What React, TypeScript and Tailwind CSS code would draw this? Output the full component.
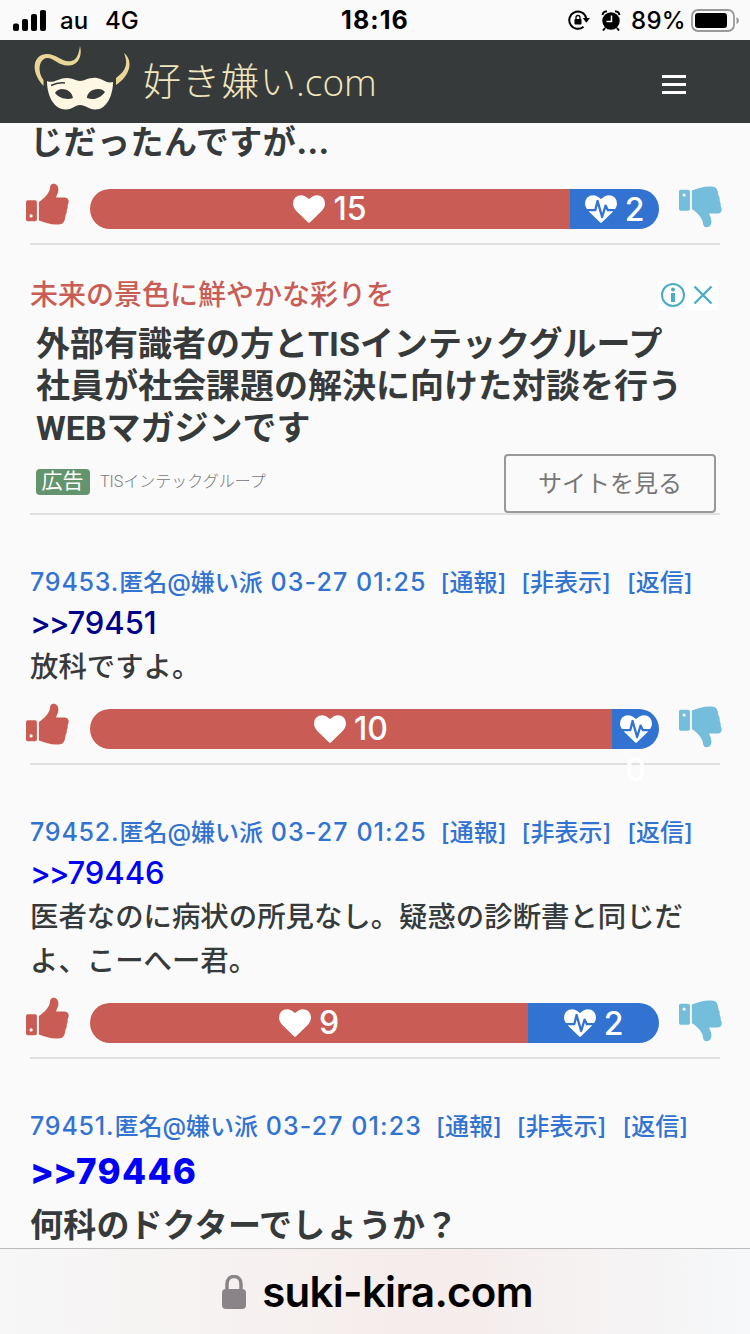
import { FC, ReactNode } from "react";

const HeartIcon: FC = () => (
  <svg viewBox="0 0 1792 1792" className="h-8 w-8 shrink-0 fill-white">
    <path d="M896 1664q-26 0-44-18l-624-602q-10-8-27.500-26t-55.500-65.500-68-97.500-53.500-121-23.500-138q0-220 127-344t351-124q62 0 126.500 21.500t120 58 95.500 68.500 76 68q36-36 76-68t95.500-68.500 120-58 126.500-21.500q224 0 351 124t127 344q0 221-229 450l-623 600q-18 18-44 18z" />
  </svg>
);

const HeartbeatIcon: FC = () => (
  <svg viewBox="0 0 1792 1792" className="my-1 h-8 w-8 shrink-0 fill-white">
    <path d="M1280 1024h305q-5 6-10 10.500t-9 7.500l-3 4-623 600q-18 18-44 18t-44-18l-624-602q-5-2-21-20h369q22 0 39.500-13.500t22.500-34.500l70-281 190 667q6 20 23 33t39 13q21 0 38-13t23-33l146-485 56 112q18 35 57 35zm512-428q0 145-103 300h-369l-111-221q-8-17-25.500-27t-36.500-8q-45 5-56 46l-129 430-196-686q-6-20-23.500-33t-39.500-13-39 13.500-22 34.500l-116 464h-423q-103-155-103-300 0-220 127-344t351-124q62 0 126.500 21.500t120 58 95.500 68.500 76 68q36-36 76-68t95.500-68.500 120-58 126.500-21.500q224 0 351 124t127 344z" />
  </svg>
);

const ThumbIcon: FC<{ className: string }> = ({ className }) => (
  <svg viewBox="0 0 130 126" className={className}>
    <path
      fillRule="evenodd"
      d="M5 52H28Q33 52 33 57V110Q33 115 28 115H5Q0 115 0 110V57Q0 52 5 52ZM15.500 94A5 5 0 1 0 15.500 104A5 5 0 1 0 15.500 94Z"
    />
    <path d="M39 57C57 45 70 30 72 17C73 7 76 2 83 2C93 2 98 10 98 20C98 30 92 37 91 43H115C126 43 130 50 129 58C128 64 125 65 126 71C127 77 122 80 123 86C124 92 120 94 119 100C117 115 114 125 97 125C76 126 58 120 39 113Z" />
  </svg>
);

const MaskLogo: FC = () => (
  <svg viewBox="0 0 120 80" className="h-20 w-[120px] shrink-0">
    <path
      fill="#e9d798"
      d="M23.500 46C9 30 14 14 27 14C38 14 44 25 54 20C58 17 59 12 60 6C62.500 15 59 25 49 25.500C38 26 35 18 27 18C19 19 17 31 23.500 40Z"
    />
    <path fill="#e9d798" d="M104 13C114 21 110 36 96 45V38C107 30 108 23 104 13Z" />
    <path
      fill="#fdf7e4"
      fillRule="evenodd"
      d="M27 41C34 44 38 38 47 38C53 38 56 41 60 41C65 41 69 37 77 38C83 39 87 44 93 42C93 56 86 70 75 69.500C67 69 66 65 60 65C54 65 53 70 45 69.500C34 69 27 56 27 41ZM35 53C40 59 48 60 53 58C52 52 47 49 42 49C39 49 37 50 35 53ZM67 58C75 61 81 57 85 52C81 48 77 49 73 50C70 51 67 54 67 58Z"
    />
    <path d="M31 45.500Q38 42 45 43" fill="none" stroke="#373a3b" strokeWidth="1.500" />
  </svg>
);

const StatusBar: FC = () => (
  <div className="grid h-10 shrink-0 grid-cols-3 items-center pl-[13px] pr-[11px] text-black">
    <div className="flex items-center text-[24px] font-medium">
      <svg viewBox="0 0 33 21" className="mr-[14px] h-[21px] w-[33px]">
        <rect x="0" y="13.500" width="6" height="7.500" rx="2" />
        <rect x="9" y="9" width="6" height="12" rx="2" />
        <rect x="18" y="4" width="6" height="17" rx="2" />
        <rect x="27" y="0" width="6" height="21" rx="2" />
      </svg>
      <span className="mr-[17px] pt-px">au</span>
      <span className="pt-px">4G</span>
    </div>
    <div className="pr-[2px] pt-px text-center text-[25px] font-bold tracking-[1.100px]">18:16</div>
    <div className="flex items-center justify-end">
      <svg viewBox="0 0 22 20" className="mr-[11px] h-5 w-[22px] shrink-0">
        <path d="M15.500 16.700A8.600 8.600 0 1 1 18.200 8" fill="none" stroke="#000" strokeWidth="2" />
        <path d="M14.800 8H22L18.300 12.800Z" />
        <rect x="6.500" y="9" width="7" height="5.500" rx=".8" />
        <path d="M8 9V7.500a2 2 0 0 1 4 0V9" fill="none" stroke="#000" strokeWidth="1.300" />
      </svg>
      <svg viewBox="0 0 20 21" className="mr-[10px] h-[21px] w-5 shrink-0">
        <circle cx="10" cy="11" r="8.700" />
        <path
          d="M1.500 5Q2 1.500 6 1.200M14 1.200Q18 1.500 18.500 5M4 18L2 20.500M16 18L18 20.500"
          fill="none"
          stroke="#000"
          strokeWidth="2"
        />
        <path d="M10.500 5.500V11.500H5.500" fill="none" stroke="#fff" strokeWidth="1.500" />
      </svg>
      <span className="mr-[5px] pt-px text-[24px] font-medium tracking-[0.300px]">89%</span>
      <svg viewBox="0 0 48 23" className="h-[23px] w-12 shrink-0">
        <rect x="1" y="1" width="42" height="21" rx="6" fill="none" stroke="#999" strokeWidth="1.800" />
        <rect x="4" y="4" width="32" height="15" rx="3" />
        <path d="M45.500 8Q48 9 48 11.500T45.500 15Z" fill="#999" />
      </svg>
    </div>
  </div>
);

const Header: FC = () => (
  <header className="flex h-[83px] shrink-0 items-start bg-[#373a3b] pl-5 pr-16">
    <MaskLogo />
    <div className="flex h-[83px] items-center text-[#f1e6bd]">
      <span className="ml-[3px] text-[38px] font-light tracking-[1px]">
        好き嫌<span className="text-[36px]">い</span>
      </span>
      <span className="-ml-[1px] font-['Open_Sans'] text-[37px] font-light">.com</span>
    </div>
    <div className="ml-auto mt-[35px] flex w-6 flex-col gap-[5px]">
      <div className="h-[3px] bg-white" />
      <div className="h-[3px] bg-white" />
      <div className="h-[3px] bg-white" />
    </div>
  </header>
);

interface VotesProps {
  likes: number;
  dislikes: number;
  likeWidth: string;
}

const Votes: FC<VotesProps> = ({ likes, dislikes, likeWidth }) => (
  <div className="relative z-10 -ml-1 -mr-[2px] mt-5 flex h-[54px] items-start text-[32px] font-medium leading-[42px] text-white">
    <ThumbIcon className="-mt-[6px] h-[42px] w-[43px] fill-[#c95d55]" />
    <div className="ml-[21px] flex h-10 w-[569px]">
      <div className={`flex items-center justify-center gap-2 rounded-l-full bg-[#c95d55] ${likeWidth}`}>
        <HeartIcon />
        <span>{likes}</span>
      </div>
      <div className="flex flex-1 flex-wrap content-start justify-center gap-x-2 rounded-r-full bg-[#3273d2]">
        <HeartbeatIcon />
        <span>{dislikes}</span>
      </div>
    </div>
    <ThumbIcon className="-mt-[3px] ml-5 h-[42px] w-[43px] -scale-y-100 fill-[#74bddb]" />
  </div>
);

interface PostProps {
  id: string;
  time: string;
  children: ReactNode;
}

const Post: FC<PostProps> = ({ id, time, children }) => (
  <article className="mx-[30px] border-b-2 border-[#e0e0e0] pt-[45px]">
    <div className="flex h-11 items-center whitespace-pre pt-px text-[24px] font-medium text-[#3273d2]">
      <span className="text-[25px] tracking-[0.800px]">{id}.</span>
      <span>匿名@嫌い派</span>
      <span className="text-[25px] tracking-[1.100px]"> {time}</span>
      <span className="ml-[14px]">[通報]</span>
      <span className="ml-[15px]">[非表示]</span>
      <span className="ml-4">[返信]</span>
    </div>
    {children}
  </article>
);

const Ad: FC = () => (
  <section className="mx-[30px] flex h-[270px] flex-col border-b-2 border-[#e0e0e0]">
    <div className="mt-[27px] flex h-11 items-center justify-between pr-[2px]">
      <span className="pt-px text-[28px] font-medium text-[#c95d55]">未来の景色に鮮やかな彩りを</span>
      <span className="mt-[2px] flex h-[30px] w-[60px] items-center gap-2 bg-white pl-[3px]">
        <svg viewBox="0 0 24 24" className="h-6 w-6 fill-[#4bacc6]">
          <circle cx="12" cy="12" r="11" fill="none" stroke="#4bacc6" strokeWidth="2" />
          <circle cx="12" cy="6.500" r="2" />
          <rect x="10" y="10" width="4" height="9" />
        </svg>
        <svg viewBox="0 0 20 20" className="h-5 w-5">
          <path d="M1.500 1.500L18.500 18.500M18.500 1.500L1.500 18.500" stroke="#4bacc6" strokeWidth="2.400" />
        </svg>
      </span>
    </div>
    <p className="ml-[6px] mt-[7px] whitespace-nowrap font-[Roboto,'Noto_Sans_CJK_JP',sans-serif] text-[34px] font-bold leading-[42px]">
      外部有識者の方とTISインテックグループ
      <br />
      社員が社会課題の解決に向けた対談を行う
      <br />
      WEBマガジンです
    </p>
    <div className="ml-[6px] mr-1 mt-auto flex items-start font-[Roboto,'Noto_Sans_CJK_JP',sans-serif]">
      <span className="mt-[15px] flex h-[26px] w-[54px] items-center justify-center rounded bg-[#63946d] pr-px text-[21px] text-white">
        広告
      </span>
      <span className="ml-[10px] mt-[15px] text-[16px] font-light leading-[26px] text-[#777]">
        TISインテックグループ
      </span>
      <span className="ml-auto flex h-[59px] w-[212px] items-center justify-center rounded border-2 border-[#999] text-[24px] text-[#777]">
        サイトを見る
      </span>
    </div>
  </section>
);

const App: FC = () => {
  return (
    <div className="flex h-[1334px] w-[750px] flex-col overflow-hidden bg-[#fafafa] font-[Inter,'Noto_Sans_CJK_JP',sans-serif] text-[#373a3b] [font-feature-settings:'calt'_0]">
      <StatusBar />
      <Header />
      <main className="min-h-0 flex-1 overflow-hidden">
        <article className="mx-[30px] border-b-2 border-[#e0e0e0]">
          <p className="h-[46px] text-[33px] font-bold leading-[38px] tracking-[0.500px]">じだったんですが…</p>
          <Votes likes={15} dislikes={2} likeWidth="w-[480px]" />
        </article>
        <Ad />
        <Post id="79453" time="03-27 01:25">
          <p className="h-[41px] text-[31px] font-medium leading-[37px] text-[#00008b]">
            <span className="tracking-[-2px]">&gt;&gt;</span>79451
          </p>
          <p className="text-[28.400px] font-medium leading-11">放科ですよ。</p>
          <Votes likes={10} dislikes={0} likeWidth="w-[522px]" />
        </Post>
        <Post id="79452" time="03-27 01:25">
          <p className="h-[41px] text-[31px] font-medium leading-[37px] text-[#0000f5]">
            <span className="tracking-[-2px]">&gt;&gt;</span>79446
          </p>
          <p className="whitespace-nowrap text-[28.400px] font-medium leading-11">
            医者なのに病状の所見なし。疑惑の診断書と同じだ
            <br />
            よ、こーへー君。
          </p>
          <Votes likes={9} dislikes={2} likeWidth="w-[438px]" />
        </Post>
        <Post id="79451" time="03-27 01:23">
          <p className="h-[54px] text-[35px] font-extrabold leading-[46px] text-[#0000f5]">
            <span className="tracking-[-1px]">&gt;&gt;</span>
            <span className="tracking-[1.300px]">79446</span>
          </p>
          <p className="text-[33px] font-bold leading-[46px] tracking-[0.200px]">何科のドクターでしょうか？</p>
        </Post>
      </main>
      <footer className="flex h-[86px] shrink-0 items-center justify-center border-t border-[#bbb] bg-linear-to-r from-[#f7f7f7] via-[#f5eceb] via-60% to-[#f6f8fa] pl-[5px] text-[42px] font-semibold tracking-[-0.700px] text-black">
        <svg viewBox="0 0 24 34" className="mr-4 h-[34px] w-6 fill-[#8a8488]">
          <rect y="14" width="24" height="20" rx="4" />
          <path d="M5 15V9C5 -1 19 -1 19 9V15" fill="none" stroke="#8a8488" strokeWidth="3.500" />
        </svg>
        <span>suki-kira.com</span>
      </footer>
    </div>
  );
};

export default App;
